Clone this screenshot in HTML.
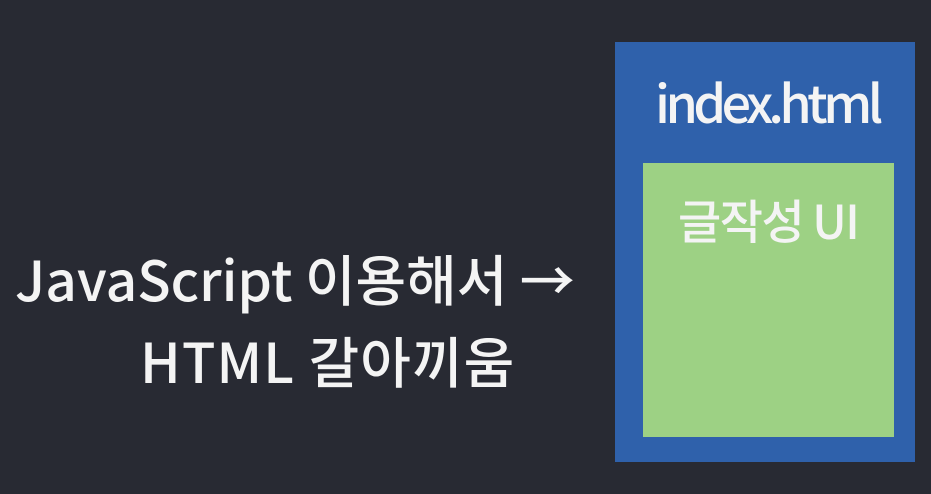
<!DOCTYPE html>
<html><head><meta charset="utf-8"><style>
html,body{margin:0;padding:0}
body{width:931px;height:494px;background:#282a33;position:relative;overflow:hidden;font-family:"Noto Sans CJK KR","Liberation Sans",sans-serif;color:#f4f4f4;font-weight:500}
.t{position:absolute;white-space:nowrap;line-height:1}
#blue{position:absolute;left:615px;top:42px;width:300px;height:420px;background:#2f61ab}
#green{position:absolute;left:643px;top:163px;width:251px;height:274px;background:#9dd184}
</style></head><body>
<div id="blue"></div>
<div id="green"></div>
<div class="t" style="left:655px;top:75px;font-size:52px;letter-spacing:-4.5px;">index.html</div>
<div class="t" style="left:678px;top:195px;font-size:47px;letter-spacing:-1.5px;">글작성 UI</div>
<div class="t" style="left:15px;top:250px;font-size:55px;letter-spacing:0;">JavaScript 이용해서 →</div>
<div class="t" style="left:140px;top:332px;font-size:55px;letter-spacing:1.1px;">HTML 갈아끼움</div>
</body></html>
